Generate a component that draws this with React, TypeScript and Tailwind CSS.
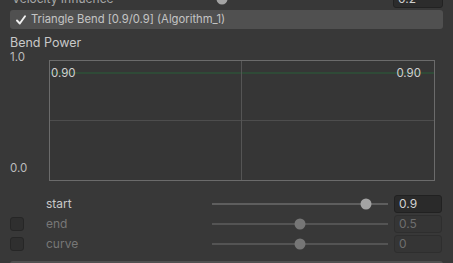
import React from "react";

const font = { fontFamily: "Inter, 'Noto Sans', sans-serif" };

function Slider({ pos, active }: { pos: number; active: boolean }) {
  // pos is the knob centre in px from the left of the track
  return (
    <div className="relative w-[176px] h-full flex items-center">
      <div className={`w-full h-[2px] ${active ? "bg-[#5e5e5e]" : "bg-[#545454]"}`} />
      <div
        className={`absolute top-1/2 -translate-y-1/2 -translate-x-1/2 w-[11px] h-[11px] rounded-full ${active ? "bg-[#a3a3a3]" : "bg-[#767676]"}`}
        style={{ left: pos }}
      />
    </div>
  );
}

function Field({ value, active }: { value: string; active: boolean }) {
  return (
    <div
      className={`w-[48px] h-[18px] rounded-[3px] border flex items-center pl-[4px] text-[12px] ${
        active ? "bg-[#2a2a2a] border-[#212121] text-[#d2d2d2]" : "bg-[#353535] border-[#2e2e2e] text-[#6e6e6e]"
      }`}
    >
      {value}
    </div>
  );
}

function ParamRow({ label, value, pos, active, toggle }: { label: string; value: string; pos: number; active: boolean; toggle?: boolean }) {
  return (
    <div className="h-[20px] flex items-center">
      <div className="w-[36px] flex items-center">
        {toggle && <div className="w-[14px] h-[14px] rounded-[3px] bg-[#2f2f2f] border border-[#262626]" />}
      </div>
      <div className={`w-[166px] text-[12px] ${active ? "text-[#c8c8c8]" : "text-[#777777]"}`}>{label}</div>
      <Slider pos={pos} active={active} />
      <div className="w-[6px]" />
      <Field value={value} active={active} />
    </div>
  );
}

export default function App() {
  return (
    <div className="w-[453px] h-[263px] overflow-hidden bg-[#383838] pl-[10px]" style={font}>
      {/* clipped row above */}
      <div className="-mt-[11px] h-[20px] flex items-center">
        <div className="w-[202px] pl-[2px] text-[12px] text-[#a8a8a8]">Velocity Influence</div>
        <Slider pos={10} active />
        <div className="w-[5px]" />
        <div className="w-[50px] h-[18px] rounded-[3px] bg-[#2c2c2c] border border-[#222] flex items-center pl-[4px] text-[12px] text-[#cfcfcf]">0.2</div>
      </div>

      {/* foldout header */}
      <div className="mt-[1px] w-[433px] h-[19px] rounded-[3px] bg-[#505050] flex items-center pl-[6px] gap-[5px] text-[11.25px] text-[#c4c4c4]">
        <svg width="10" height="10" viewBox="0 0 10 10" className="mt-[1px]">
          <polyline points="1,5.5 3.8,8.5 9,1.2" fill="none" stroke="#f0f0f0" strokeWidth="1.9" strokeLinecap="round" strokeLinejoin="round" />
        </svg>
        <span>Triangle Bend [0.9/0.9] (Algorithm_1)</span>
      </div>

      <div className="mt-[7px] h-[14px] leading-[14px] text-[12.5px] text-[#c8c8c8]">Bend Power</div>

      {/* curve graph */}
      <div className="flex">
        <div className="w-[39px] h-[124px] flex flex-col justify-between text-[11.5px] text-[#bdbdbd] leading-[12px]">
          <span className="mt-[1px]">1.0</span>
          <span>0.0</span>
        </div>
        <div className="mt-[10px] w-[386px] h-[121px] border border-[#6b6b6b] bg-[#363636] relative">
          <div className="absolute left-0 right-0 top-[11px] h-[2px] bg-[#2f4a37]" />
          <div className="absolute left-0 right-0 top-[59px] h-[1px] bg-[#4d4d4d]" />
          <div className="absolute top-0 bottom-0 left-[191px] w-[1px] bg-[#555555]" />
          <span className="absolute left-[1px] top-[5px] text-[11.5px] leading-[14px] text-[#d0d0d0]">0.90</span>
          <span className="absolute right-[13px] top-[5px] text-[11.5px] leading-[14px] text-[#d0d0d0]">0.90</span>
        </div>
      </div>

      {/* parameters */}
      <div className="mt-[13px] flex flex-col">
        <ParamRow label="start" value="0.9" pos={154} active />
        <ParamRow label="end" value="0.5" pos={88} active={false} toggle />
        <ParamRow label="curve" value="0" pos={88} active={false} toggle />
      </div>

      {/* next foldout header, clipped */}
      <div className="mt-[7px] w-[433px] h-[18px] rounded-[3px] bg-[#505050]" />
    </div>
  );
}
